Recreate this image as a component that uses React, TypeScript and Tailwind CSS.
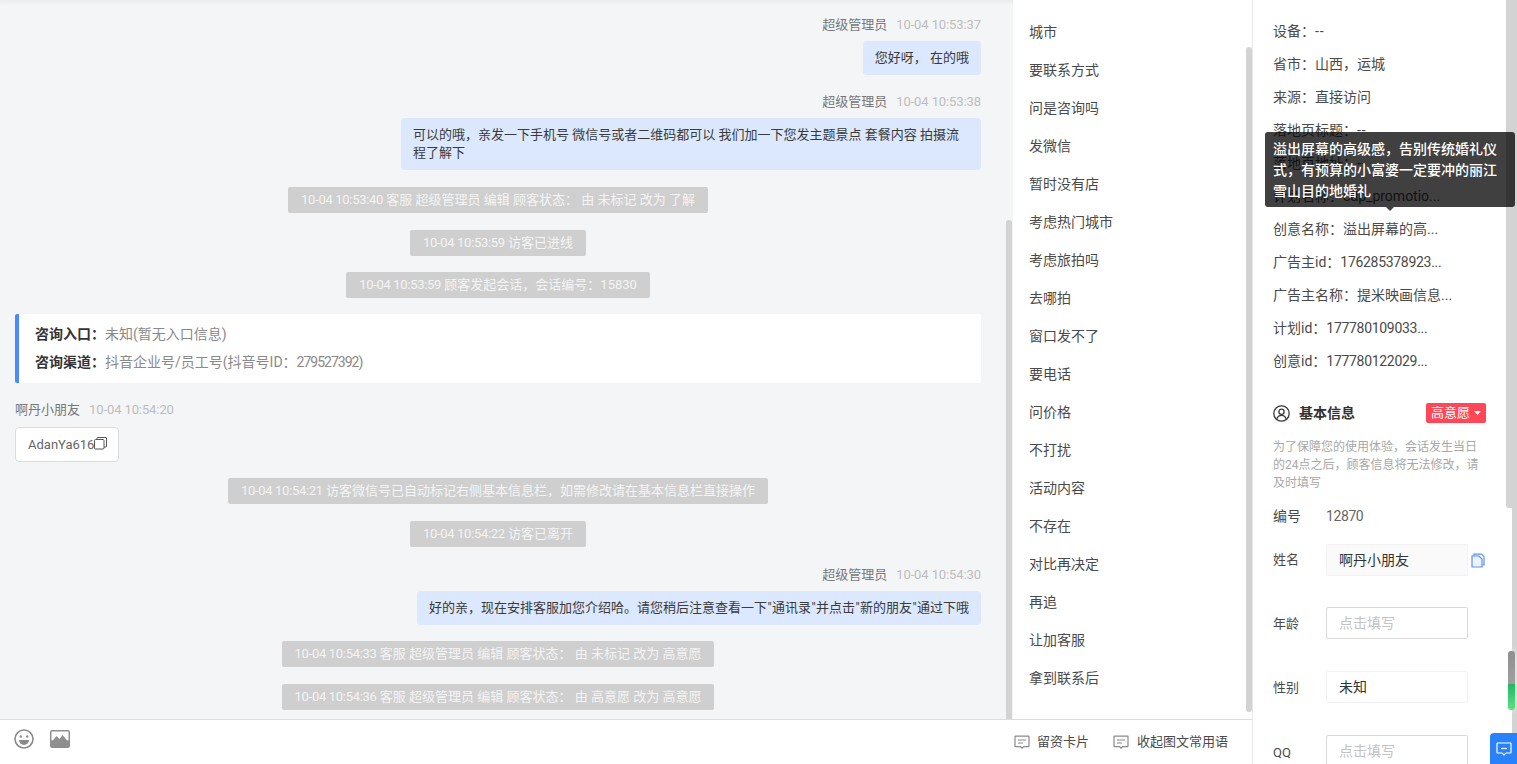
const font = "font-['Roboto','Noto_Sans_CJK_SC',sans-serif]";

function Name({ name, time, right }: { name: string; time: string; right?: boolean }) {
  return (
    <div className={`flex h-[18px] items-center gap-[9px] text-[13px] leading-[18px] ${right ? 'justify-end' : ''}`}>
      <span className="text-[#787878]">{name}</span>
      <span className="tracking-[-0.1px] text-[#bdbdbd]">{time}</span>
    </div>
  );
}

function Bubble({ children, className = '' }: { children: React.ReactNode; className?: string }) {
  return (
    <div className={`ml-auto rounded-[4px] bg-[#dce8fd] px-3 py-[8px] text-[13px] leading-[18px] text-[#3a3a3a] ${className}`}>
      {children}
    </div>
  );
}

function Sys({ time, children, mt }: { time: string; children: React.ReactNode; mt: string }) {
  return (
    <div className={`mx-auto h-[26px] w-fit whitespace-pre rounded-[2px] bg-[#cfcfcf] px-[13px] text-[13px] leading-[26px] text-[#f4f4f4] ${mt}`}>
      <span className="tracking-[-0.3px]">{time}</span> {children}
    </div>
  );
}

function Q() {
  return <span className="px-[0.4px]">"</span>;
}

function N({ children }: { children: React.ReactNode }) {
  return <span className="tracking-[-0.3px]">{children}</span>;
}

const phrases = ['城市', '要联系方式', '问是咨询吗', '发微信', '暂时没有店', '考虑热门城市', '考虑旅拍吗', '去哪拍', '窗口发不了', '要电话', '问价格', '不打扰', '活动内容', '不存在', '对比再决定', '再追', '让加客服', '拿到联系后'];

const info: [string, string?][] = [
  ['设备：', '--'],
  ['省市：山西，运城'],
  ['来源：直接访问'],
  ['落地页标题：', '--'],
  ['落地页地址：', '--'],
  ['计划名称：cdp_promotio...'],
  ['创意名称：溢出屏幕的高...'],
  ['广告主id：', '176285378923...'],
  ['广告主名称：提米映画信息...'],
  ['计划id：', '177780109033...'],
  ['创意id：', '177780122029...'],
];

function ChatIcon() {
  return (
    <svg width="16" height="16" viewBox="0 0 16 16" fill="none" stroke="#8a8a8a" strokeWidth="1.2">
      <path d="M1.6 2.2h12.8a.6.6 0 0 1 .6.6v9.2a.6.6 0 0 1-.6.6H9.6L8 14.2l-1.6-1.6H1.6a.6.6 0 0 1-.6-.6V2.800a.6.6 0 0 1 .6-.6z" />
      <path d="M4 6h8M4 9h5" />
    </svg>
  );
}

function Field({ label, value, placeholder, filled, className = '', labelClass = '' }: { label: string; value?: string; placeholder?: string; filled?: boolean; className?: string; labelClass?: string }) {
  return (
    <div className={`flex items-center ${className}`}>
      <span className={`w-[53px] shrink-0 text-[13px] text-[#4a4a4a] ${labelClass}`}>{label}</span>
      <div className={`flex h-[32px] w-[142px] items-center rounded-[2px] border px-3 text-[14px] ${placeholder ? 'border-[#d9d9d9] text-[#c4c4c4]' : 'border-[#f2f2f2] text-[#333333]'} ${filled ? 'bg-[#fafafa]' : 'bg-white'}`}>
        {value ?? placeholder}
      </div>
    </div>
  );
}

export default function App() {
  return (
    <div className={`flex h-[764px] w-[1517px] overflow-hidden bg-white ${font}`}>
      <div className="flex w-[1253px] shrink-0 flex-col border-r border-[#e8e8e8]">
        <div className="flex h-[719px] shrink-0">
          <div className="relative h-full w-[1013px] shrink-0 overflow-hidden bg-[#f4f5f7] pl-[15px] pr-[32px] pt-[16px] shadow-[inset_0_5px_4px_-3px_rgba(0,0,0,0.05)]">
            <Name right name="超级管理员" time="10-04 10:53:37" />
            <Bubble className="mt-[7px] w-fit">您好呀， 在的哦</Bubble>
            <div className="mt-[18px]"><Name right name="超级管理员" time="10-04 10:53:38" /></div>
            <Bubble className="mt-[7px] w-[580px]">可以的哦，亲发一下手机号 微信号或者二维码都可以 我们加一下您发主题景点 套餐内容 拍摄流程了解下</Bubble>
            <Sys mt="mt-[17px]" time="10-04 10:53:40">客服 超级管理员 编辑 顾客状态： 由 未标记 改为 了解</Sys>
            <Sys mt="mt-[17px]" time="10-04 10:53:59">访客已进线</Sys>
            <Sys mt="mt-[16px]" time="10-04 10:53:59">顾客发起会话，会话编号：15830</Sys>
            <div className="mt-[16px] h-[69px] rounded-[2px] border-l-[4px] border-[#4a8bfb] bg-white pl-[16px] pt-[6px] text-[14px] leading-[28px] text-[#8a8a8a]">
              <div><b className="font-semibold text-[#333333]">咨询入口：</b>未知(暂无入口信息)</div>
              <div><b className="font-semibold text-[#333333]">咨询渠道：</b>抖音企业号/员工号(抖音号ID：<span className="tracking-[-1px]">279527392)</span></div>
            </div>
            <div className="mt-[18px]"><Name name="啊丹小朋友" time="10-04 10:54:20" /></div>
            <div className="mt-[8px] flex h-[35px] w-[104px] items-center rounded-[4px] border border-[#dcdcdc] bg-white pl-3 text-[13px] text-[#666666]">
              AdanYa616
              <svg className="-mt-[3px]" width="13" height="13" viewBox="0 0 13 13" fill="none" stroke="#555555" strokeWidth="1"><rect x="0.5" y="2.500" width="9.500" height="9.500" rx="1" /><path d="M3 2.500V1a.5.5 0 0 1 .5-.5h8.500a.5.5 0 0 1 .5.5v8.500a.5.5 0 0 1-.5.5H10" /></svg>
            </div>
            <Sys mt="mt-[16px]" time="10-04 10:54:21">访客微信号已自动标记右侧基本信息栏，如需修改请在基本信息栏直接操作</Sys>
            <Sys mt="mt-[17px]" time="10-04 10:54:22">访客已离开</Sys>
            <div className="mt-[19px]"><Name right name="超级管理员" time="10-04 10:54:30" /></div>
            <Bubble className="mt-[7px] w-fit">好的亲，现在安排客服加您介绍哈。请您稍后注意查看一下<Q />通讯录<Q />并点击<Q />新的朋友<Q />通过下哦</Bubble>
            <Sys mt="mt-[16px]" time="10-04 10:54:33">客服 超级管理员 编辑 顾客状态： 由 未标记 改为 高意愿</Sys>
            <Sys mt="mt-[17px]" time="10-04 10:54:36">客服 超级管理员 编辑 顾客状态： 由 高意愿 改为 高意愿</Sys>
            <div className="absolute right-[1px] top-[220px] h-[499px] w-[6px] rounded-t-[3px] bg-[#d3d3d3]" />
          </div>
          <div className="relative flex-1 overflow-hidden bg-white pl-[16px] pt-[13px]">
            {phrases.map((p) => (
              <div key={p} className="flex h-[38px] items-center text-[14px] text-[#4a4a4a]">{p}</div>
            ))}
            <div className="absolute right-[0px] top-[47px] h-[665px] w-[6px] rounded-[3px] bg-[#d3d3d3]" />
          </div>
        </div>
        <div className="flex flex-1 items-center justify-between border-t border-[#dcdcdc] pl-[14px] pr-[24px]">
          <div className="-mt-[7px] flex items-center gap-[16px]">
            <svg width="20" height="20" viewBox="0 0 20 20" fill="none" stroke="#8a8a8a" strokeWidth="1.600">
              <circle cx="10" cy="10" r="9" />
              <circle cx="6.800" cy="7.500" r="1.200" fill="#8a8a8a" stroke="none" />
              <circle cx="13.200" cy="7.500" r="1.200" fill="#8a8a8a" stroke="none" />
              <path d="M5 11h10a5 5 0 0 1-10 0z" fill="#8a8a8a" stroke="none" />
            </svg>
            <svg width="20" height="18" viewBox="0 0 20 18">
              <rect x="0" y="0" width="20" height="18" rx="2" fill="#8f8f8f" />
              <rect x="1.500" y="1.500" width="17" height="9" fill="#ffffff" />
              <path d="M1.500 12l5-6 3 3 3-4 6 7v4.500h-17z" fill="#8f8f8f" />
            </svg>
          </div>
          <div className="flex items-center gap-[24px] text-[13px] text-[#4a4a4a]">
            <span className="flex items-center gap-[7px]"><ChatIcon />留资卡片</span>
            <span className="flex items-center gap-[8px]"><ChatIcon />收起图文常用语</span>
          </div>
        </div>
      </div>

      <div className="relative flex-1 overflow-hidden pl-[20px] pt-[15px]">
        {info.map(([a, b]) => (
          <div key={a} className="h-[33px] whitespace-pre text-[14px] leading-[33px] text-[#4a4a4a]">
            {a}
            {b === '--' ? <span className="tracking-[1px]">{b}</span> : b ? <N>{b}</N> : null}
          </div>
        ))}

        <div className="mt-[25px] flex h-[20px] w-[213px] items-center">
          <svg width="17" height="17" viewBox="0 0 17 17" fill="none" stroke="#3a3a3a" strokeWidth="1.300">
            <circle cx="8.500" cy="8.500" r="7.700" />
            <circle cx="8.500" cy="6.800" r="2.600" />
            <path d="M3.800 14c.8-2.400 2.600-3.600 4.700-3.600s3.900 1.200 4.700 3.600" />
          </svg>
          <span className="ml-[9px] text-[14px] font-semibold text-[#333333]">基本信息</span>
          <span className="ml-auto flex h-[20px] w-[60px] items-center justify-center rounded-[2px] bg-[#ff4757] text-[13px] text-white">
            高意愿
            <svg className="ml-[4px]" width="7" height="4" viewBox="0 0 7 4"><path d="M0 0h7L3.500 4z" fill="#ffffff" /></svg>
          </span>
        </div>
        <p className="mt-[15px] w-[212px] text-[12px] leading-[18px] text-[#a8a8a8]">为了保障您的使用体验，会话发生当日的24点之后，顾客信息将无法修改，请及时填写</p>
        <div className="mt-[15px] flex h-[18px] items-center text-[14px] text-[#4a4a4a]">
          <span className="w-[53px]">编号</span><span className="tracking-[-0.4px] text-[#666666]">12870</span>
        </div>
        <div className="mt-[19px] flex items-center">
          <Field label="姓名" value="啊丹小朋友" filled />
          <svg className="ml-[3px]" width="14" height="15" viewBox="0 0 14 15" fill="none" stroke="#5b8ff9" strokeWidth="1.200">
            <path d="M3 3V1.200h7.500L13 3.700V12h-1.500" />
            <path d="M1 3h7l3 3v8H1z" fill="#eef4ff" />
          </svg>
        </div>
        <Field className="mt-[31px]" labelClass="pt-[2px]" label="年龄" placeholder="点击填写" />
        <Field className="mt-[32px]" labelClass="pt-[2px]" label="性别" value="未知" />
        <Field className="mt-[32px]" labelClass="pt-[3px]" label="QQ" placeholder="点击填写" />

        <div className="absolute right-0 top-0 h-[764px] w-[5px] bg-[#d3d3d3]" />
        <div className="absolute right-[5px] top-0 h-[508px] w-[6px] rounded-bl-[3px] bg-[#d3d3d3]" />
        <div className="absolute right-[2px] top-[651px] h-[59px] w-[7px] rounded-[3px] bg-[linear-gradient(#8f8f8f_0%,#a0a0a0_55%,#21b765_56%,#5fe27f_100%)] shadow-[0_0_6px_rgba(255,255,255,0.9)]" />

        <div className="absolute bottom-0 right-0 flex h-[31px] w-[27px] items-center justify-center rounded-tl-[4px] bg-[#2a82fb]">
          <svg width="16" height="16" viewBox="0 0 16 16" fill="none" stroke="#ffffff" strokeWidth="1.200">
            <path d="M1.500 2h13a.5.5 0 0 1 .5.5v9a.5.5 0 0 1-.5.5H10l-2 2-2-2H1.500a.5.5 0 0 1-.5-.5v-9a.5.5 0 0 1 .5-.5z" />
            <path d="M5 7.500h6" />
          </svg>
        </div>

        <div className="absolute left-[12px] top-[132px] w-[250px] rounded-[3px] bg-[rgba(0,0,0,0.75)] px-2 pb-[5px] pt-[7px] text-[14px] font-medium leading-[21px] text-white">
          溢出屏幕的高级感，告别传统婚礼仪式，有预算的小富婆一定要冲的丽江雪山目的地婚礼
          <div className="absolute -bottom-[4px] left-[121px] h-0 w-0 border-x-[4px] border-t-[4px] border-x-transparent border-t-[rgba(0,0,0,0.75)]" />
        </div>
      </div>
    </div>
  );
}
